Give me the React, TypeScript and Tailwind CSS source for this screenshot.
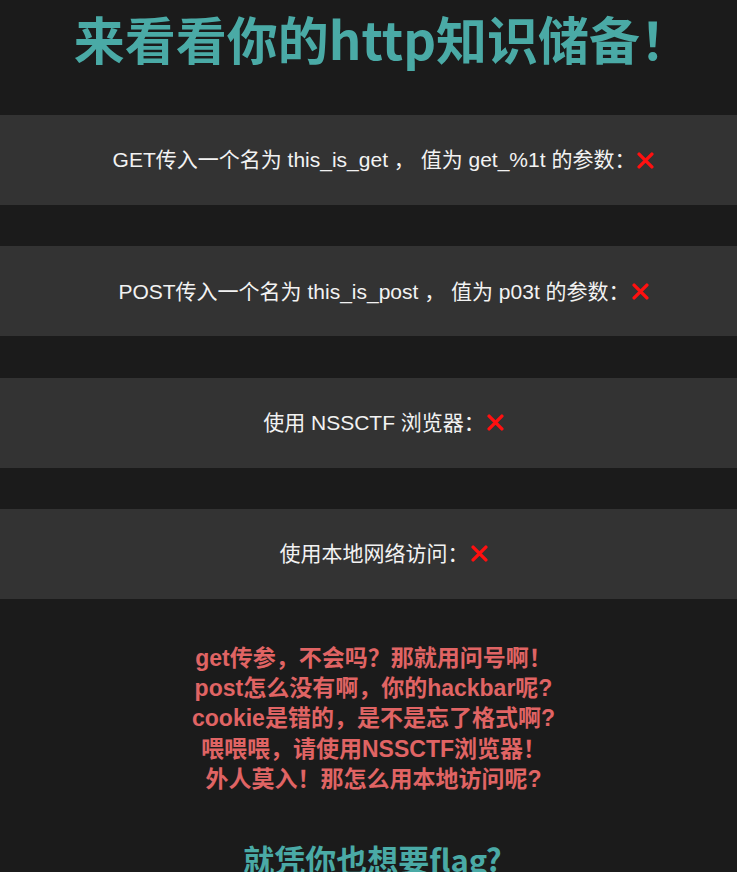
import React from "react"

const items = [
  "GET传入一个名为 this_is_get ， 值为 get_%1t 的参数：",
  "POST传入一个名为 this_is_post ， 值为 p03t 的参数：",
  "使用 NSSCTF 浏览器：",
  "使用本地网络访问：",
]

const hints = [
  "get传参，不会吗？那就用问号啊！",
  "post怎么没有啊，你的hackbar呢?",
  "cookie是错的，是不是忘了格式啊?",
  "喂喂喂，请使用NSSCTF浏览器！",
  "外人莫入！那怎么用本地访问呢?",
]

function Cross() {
  return (
    <svg width="17" height="17" viewBox="0 0 16 16" className="inline-block ml-0.5">
      <path d="M2 2 L14 14 M14 2 L2 14" stroke="#ff1010" strokeWidth="3.2" strokeLinecap="round" />
    </svg>
  )
}

export default function App() {
  return (
    <div className="min-h-[872px] bg-[#1b1b1b] overflow-hidden">
      {/* Title */}
      <h1 className="pt-[8px] pl-[28px] text-center text-[51px] font-bold leading-[60px] text-[#4aaaa6] font-['Noto_Sans_CJK_SC','Noto_Sans',sans-serif]">
        来看看你的http知识储备！
      </h1>

      {/* Checks */}
      <div className="mt-[47px] flex flex-col gap-[41.3px]">
        {items.map((text) => (
          <div
            key={text}
            className="h-[90px] pl-[30px] bg-[#333333] flex items-center justify-center text-[21px] text-[#f2f2f2] font-['Liberation_Sans','Noto_Sans_CJK_SC',sans-serif]"
          >
            <span>{text}</span>
            <Cross />
          </div>
        ))}
      </div>

      {/* Hints */}
      <div className="mt-[44px] pl-[10px] flex flex-col items-center text-[23px] font-bold leading-[30.3px] text-[#e06464] font-['Liberation_Sans','Noto_Sans_CJK_SC',sans-serif]">
        {hints.map((h) => (
          <div key={h}>{h}</div>
        ))}
      </div>

      <h2 className="mt-[45px] pl-[8px] text-center text-[31px] font-bold leading-[40px] text-[#4aaaa6] font-['Noto_Sans_CJK_SC','Noto_Sans',sans-serif]">
        就凭你也想要flag?
      </h2>
    </div>
  )
}
